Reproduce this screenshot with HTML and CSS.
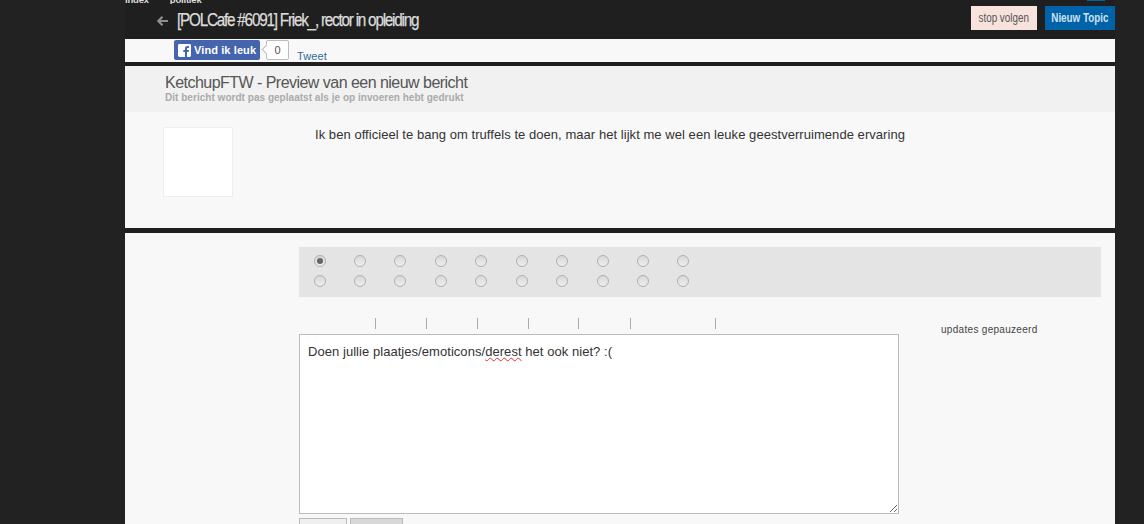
FILE: index.html
```html
<!DOCTYPE html>
<html lang="nl">
<head>
<meta charset="utf-8">
<title>[POLCafe #6091] Friek_, rector in opleiding</title>
<link rel="stylesheet" href="styles.css">
</head>
<body>
<div class="page">
  <header class="topbar">
    <nav class="crumbs"><span>index</span><span>politiek</span></nav>
    <span class="notif"></span>
    <div class="titlerow">
      <svg class="back" width="11" height="10" viewBox="0 0 11 10"><path d="M5.500 .8 1.300 5l4.200 4.200M2 5h9" fill="none" stroke="#8f8f8f" stroke-width="2.200"/></svg>
      <h1 class="title">[POLCafe #6091] Friek_, rector in opleiding</h1>
      <div class="actions">
        <a class="btn btn-stop"><span class="btn-label">stop volgen</span></a>
        <a class="btn btn-new"><span class="btn-label">Nieuw Topic</span></a>
      </div>
    </div>
  </header>
  <section class="social">
    <a class="fb">
      <svg class="fb-icon" width="13" height="13" viewBox="0 0 14 14"><rect width="14" height="14" rx="1.500" fill="#fff"/><path d="M9.700 14V8.600h1.800l.3-2.100H9.700V5.200c0-.6.2-1 1-1h1.100V2.300c-.2 0-.9-.1-1.600-.1-1.600 0-2.700 1-2.700 2.800v1.500H5.700v2.100h1.800V14z" fill="#4464ad"/></svg>
      <span>Vind ik leuk</span>
    </a>
    <span class="count">0</span>
    <a class="tweet">Tweet</a>
  </section>
  <section class="preview">
    <div class="preview-head">
      <h2>KetchupFTW - Preview van een nieuw bericht</h2>
      <p>Dit bericht wordt pas geplaatst als je op invoeren hebt gedrukt</p>
    </div>
    <div class="post">
      <div class="avatar"></div>
      <p class="post-text">Ik ben officieel te bang om truffels te doen, maar het lijkt me wel een leuke geestverruimende ervaring</p>
    </div>
  </section>
  <section class="reply">
    <div class="radios">
      <span class="radio on"></span><span class="radio"></span><span class="radio"></span><span class="radio"></span><span class="radio"></span><span class="radio"></span><span class="radio"></span><span class="radio"></span><span class="radio"></span><span class="radio"></span>
      <span class="radio"></span><span class="radio"></span><span class="radio"></span><span class="radio"></span><span class="radio"></span><span class="radio"></span><span class="radio"></span><span class="radio"></span><span class="radio"></span><span class="radio"></span>
    </div>
    <div class="editor-row">
      <div class="editor">
        <div class="toolbar">
          <span class="tool t1"></span><span class="tool t1"></span><span class="tool t1"></span><span class="tool t3"></span><span class="tool t4"></span><span class="tool t5"></span><span class="tool"></span>
        </div>
        <div class="textbox">Doen jullie plaatjes/emoticons/<span class="misspelt">derest</span> het ook niet? :(</div>
        <div class="buttons"><a class="fbtn"></a><a class="fbtn fbtn-alt"></a></div>
      </div>
      <div class="status">updates gepauzeerd</div>
    </div>
  </section>
</div>
</body>
</html>
```
FILE: styles.css
```css
* { box-sizing: border-box; }
html, body { margin: 0; height: 524px; overflow: hidden; }
body { background: #222; font-family: "Liberation Sans", Arial, sans-serif; color: #333; }
.page { width: 990px; margin-left: 125px; height: 524px; overflow: hidden; background: #1f1f1f; }

.topbar { height: 39px; position: relative; }
.crumbs { display: flex; height: 4px; overflow: hidden; gap: 21px; color: #ddd; font-size: 9.500px; font-weight: bold; line-height: 0; letter-spacing: -.2px; }
.notif { position: absolute; left: 962px; top: 0; width: 18px; height: 1px; background: #0063a8; }
.titlerow { display: flex; align-items: center; height: 24px; margin-top: 2px; padding-left: 32px; }
.back { margin: 6px 9px 0 0; }
.title { margin: 4px 0 0; font-size: 18px; font-weight: normal; color: #ddd; -webkit-text-stroke: .25px #ddd; letter-spacing: -1.450px; line-height: 24px; white-space: nowrap; transform: scaleX(.85); transform-origin: left center; width: 241px; }
.actions { margin-left: auto; display: flex; gap: 8px; }
.btn { display: flex; align-items: center; justify-content: center; height: 24px; font-size: 12px; white-space: nowrap; }
.btn-label { display: inline-block; transform: scaleX(.82); }
.btn-stop { width: 66px; background: #f7e2dc; color: #555; }
.btn-new { width: 70px; background: #0063a8; color: #cfe2f0; font-weight: bold; }

.social { height: 23px; background: #f8f8f8; display: flex; align-items: flex-start; padding: 1px 0 0 49px; }
.fb { display: flex; align-items: center; gap: 3px; width: 86px; height: 20px; padding-left: 4px; background: #4464ad; border-radius: 2px; color: #fff; font-size: 11px; font-weight: bold; letter-spacing: .1px; }
.count { width: 23px; height: 20px; margin-left: 6px; border: 1px solid #bbb; border-radius: 2px; background: #fff; color: #555; font-size: 11px; line-height: 18px; text-align: center; position: relative; }
.count::before { content: ""; position: absolute; left: -4px; top: 5px; width: 6px; height: 6px; background: #fff; border-left: 1px solid #bbb; border-bottom: 1px solid #bbb; transform: rotate(45deg); }
.tweet { margin: 10px 0 0 8px; color: #33699c; font-size: 11px; line-height: 13px; letter-spacing: .1px; }

.preview { margin-top: 4px; height: 162px; background: #f8f8f8; }
.preview-head { height: 46px; background: #f1f1f1; padding: 8px 0 0 40px; }
.preview-head h2 { margin: 0; font-size: 16px; font-weight: normal; line-height: 18px; letter-spacing: -.53px; color: #555; }
.preview-head p { margin: 0; font-size: 10px; font-weight: bold; line-height: 11px; letter-spacing: .03px; color: #aaa; }
.post { display: flex; padding: 15px 0 0 38px; }
.avatar { width: 70px; height: 70px; background: #fff; border: 1px solid #eee; }
.post-text { margin: 0 0 0 82px; font-size: 13px; line-height: 16px; letter-spacing: .05px; color: #333; }

.reply { margin-top: 5px; height: 291px; background: #f8f8f8; padding: 14px 14px 0 174px; }
.radios { height: 50px; background: #e4e4e4; padding: 8px 0 0 14.600px; display: grid; grid-template-columns: repeat(10, 40.430px); grid-auto-rows: 20px; }
.radio { width: 12px; height: 12px; border-radius: 50%; border: 1px solid #b0b0b0; background: linear-gradient(#d8d8d8, #eeeeee); position: relative; }
.radio.on::after { content: ""; position: absolute; left: 2px; top: 2px; width: 6px; height: 6px; border-radius: 50%; background: #666; }

.editor-row { display: flex; margin-top: 21px; }
.editor { width: 600px; }
.toolbar { height: 16px; display: flex; padding-left: 76px; }
.tool { height: 11px; border-left: 1px solid #aaa; }
.t1 { width: 51px; }
.t3 { width: 50px; }
.t4 { width: 52px; }
.t5 { width: 85px; }
.textbox { width: 600px; height: 180px; background: #fff; border: 1px solid #bbb; padding: 9px 8px 8px; font-size: 13px; line-height: 16px; letter-spacing: .05px; color: #333; overflow: auto; resize: both; }
.misspelt { text-decoration: underline wavy #e03030 1px; }
.buttons { display: flex; gap: 3px; margin-top: 4px; }
.fbtn { width: 48px; height: 24px; background: #efefef; border: 1px solid #bbb; }
.fbtn-alt { width: 53px; background: #d8d8d8; }
.status { margin: 6px 0 0 42px; font-size: 10px; line-height: 12px; letter-spacing: .3px; color: #444; }
```
